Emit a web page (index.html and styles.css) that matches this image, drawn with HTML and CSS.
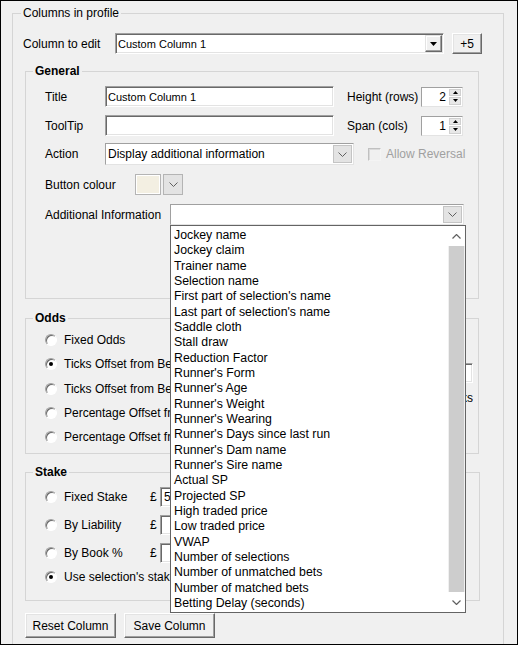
FILE: index.html
```html
<!DOCTYPE html>
<html lang="en">
<head>
    <meta charset="UTF-8">
    <title>Columns in profile</title>
    <link rel="stylesheet" href="styles.css">
</head>
<body>
    <div class="window">
        <fieldset class="group outer">
            <legend>Columns in profile</legend>

            <div class="edit-row">
                <span class="edit-label">Column to edit</span>
                <div class="classic-combo">
                    <span class="value">Custom Column 1</span>
                    <span class="classic-btn">
                        <svg width="7" height="4" viewBox="0 0 7 4"><path d="M0 0h7L3.5 4z" fill="#000"/></svg>
                    </span>
                </div>
                <button class="btn plus">+5</button>
            </div>

            <fieldset class="group general">
                <legend>General</legend>

                <div class="g-row first">
                    <span class="g-label">Title</span>
                    <div class="sunken title-box">Custom Column 1</div>
                    <span class="side-label">Height (rows)</span>
                    <div class="spinner">
                        <span class="num">2</span>
                        <span class="arrows">
                            <span><svg width="5" height="3" viewBox="0 0 5 3"><path d="M0 3h5L2.5 0z" fill="#000"/></svg></span>
                            <span><svg width="5" height="3" viewBox="0 0 5 3"><path d="M0 0h5L2.5 3z" fill="#000"/></svg></span>
                        </span>
                    </div>
                </div>

                <div class="g-row tip">
                    <span class="g-label">ToolTip</span>
                    <div class="sunken title-box"></div>
                    <span class="side-label">Span (cols)</span>
                    <div class="spinner">
                        <span class="num">1</span>
                        <span class="arrows">
                            <span><svg width="5" height="3" viewBox="0 0 5 3"><path d="M0 3h5L2.5 0z" fill="#000"/></svg></span>
                            <span><svg width="5" height="3" viewBox="0 0 5 3"><path d="M0 0h5L2.5 3z" fill="#000"/></svg></span>
                        </span>
                    </div>
                </div>

                <div class="g-row action">
                    <span class="g-label">Action</span>
                    <div class="flat-combo action-combo">
                        <span class="value">Display additional information</span>
                        <span class="chev"><svg width="9" height="5" viewBox="0 0 9 5"><path d="M0.5 0.5L4.5 4.5L8.5 0.5" fill="none" stroke="#606060"/></svg></span>
                    </div>
                    <span class="check"></span>
                    <span class="disabled">Allow Reversal</span>
                </div>

                <div class="g-row colour">
                    <span class="g-label wide">Button colour</span>
                    <span class="swatch"></span>
                    <span class="swatch-btn"><svg width="9" height="5" viewBox="0 0 9 5"><path d="M0.5 0.5L4.5 4.5L8.5 0.5" fill="none" stroke="#606060"/></svg></span>
                </div>

                <div class="g-row info">
                    <span class="g-label wider">Additional Information</span>
                    <div class="flat-combo info-combo">
                        <span class="value"></span>
                        <span class="chev"><svg width="9" height="5" viewBox="0 0 9 5"><path d="M0.5 0.5L4.5 4.5L8.5 0.5" fill="none" stroke="#606060"/></svg></span>
                    </div>
                </div>
            </fieldset>

            <fieldset class="group odds">
                <legend>Odds</legend>
                <div class="odds-body">
                    <!-- the open list covers the rest of these rows -->
                    <div class="options">
                        <label class="opt"><span class="radio"></span>Fixed Odds</label>
                        <label class="opt"><span class="radio on"></span>Ticks Offset from Best Back</label>
                        <label class="opt"><span class="radio"></span>Ticks Offset from Best Lay</label>
                        <label class="opt"><span class="radio"></span>Percentage Offset from Best Back</label>
                        <label class="opt"><span class="radio"></span>Percentage Offset from Best Lay</label>
                    </div>
                    <div class="odds-side">
                        <span class="sunken offset-box"></span>
                        <span class="side-text">ticks</span>
                    </div>
                </div>
            </fieldset>

            <fieldset class="group stake">
                <legend>Stake</legend>
                <div class="stake-body">
                    <div class="s-row">
                        <span class="radio"></span>
                        <span class="s-label">Fixed Stake</span>
                        <span class="pound">£</span>
                        <span class="sunken stake-box">5</span>
                    </div>
                    <div class="s-row">
                        <span class="radio"></span>
                        <span class="s-label">By Liability</span>
                        <span class="pound">£</span>
                        <span class="sunken stake-box"></span>
                    </div>
                    <div class="s-row">
                        <span class="radio"></span>
                        <span class="s-label">By Book %</span>
                        <span class="pound">£</span>
                        <span class="sunken stake-box"></span>
                    </div>
                    <div class="s-row last">
                        <span class="radio on"></span>
                        <span class="s-label">Use selection's stake</span>
                    </div>
                </div>
            </fieldset>

            <div class="buttons">
                <button class="btn wide-btn">Reset Column</button>
                <button class="btn wide-btn">Save Column</button>
            </div>
        </fieldset>

        <!-- open dropdown of Additional Information -->
        <div class="droplist">
            <ul>
                <li>Jockey name</li>
                <li>Jockey claim</li>
                <li>Trainer name</li>
                <li>Selection name</li>
                <li>First part of selection's name</li>
                <li>Last part of selection's name</li>
                <li>Saddle cloth</li>
                <li>Stall draw</li>
                <li>Reduction Factor</li>
                <li>Runner's Form</li>
                <li>Runner's Age</li>
                <li>Runner's Weight</li>
                <li>Runner's Wearing</li>
                <li>Runner's Days since last run</li>
                <li>Runner's Dam name</li>
                <li>Runner's Sire name</li>
                <li>Actual SP</li>
                <li>Projected SP</li>
                <li>High traded price</li>
                <li>Low traded price</li>
                <li>VWAP</li>
                <li>Number of selections</li>
                <li>Number of unmatched bets</li>
                <li>Number of matched bets</li>
                <li>Betting Delay (seconds)</li>
            </ul>
            <div class="scrollbar">
                <span class="sb-arrow"><svg width="9" height="5" viewBox="0 0 9 5"><path d="M0.5 4.5L4.5 0.5L8.5 4.5" fill="none" stroke="#606060" stroke-width="1.2"/></svg></span>
                <span class="sb-thumb"></span>
                <span class="sb-arrow"><svg width="9" height="5" viewBox="0 0 9 5"><path d="M0.5 0.5L4.5 4.5L8.5 0.5" fill="none" stroke="#606060" stroke-width="1.2"/></svg></span>
            </div>
        </div>
    </div>
</body>
</html>
```

FILE: styles.css
```css
* {
    margin: 0;
    padding: 0;
    box-sizing: border-box;
}

body {
    font-family: "Liberation Sans", Arial, sans-serif;
    font-size: 12px;
    color: #000;
    background: #f0f0f0;
}

.window {
    width: 518px;
    height: 645px;
    border: 1px solid #000;
    background: #f0f0f0;
    position: relative;
    overflow: hidden;
}

/* group boxes */
.group {
    border: 1px solid #d5d5d5;
    min-width: 0;
}

.group legend {
    font-size: 12px;
    line-height: 15px;
    padding: 0 2px;
    margin-left: 7px;
}

.outer {
    margin: 5px 0 0 11px;
    width: 492px;
    height: 680px;
    border-bottom: none;
}

.outer > legend {
    margin-left: 8px;
}

.general legend,
.odds legend,
.stake legend {
    font-weight: bold;
}

/* shared controls */
.sunken {
    background: #fff;
    border: 1px solid;
    border-color: #a0a0a0 #fff #fff #a0a0a0;
    box-shadow: inset 1px 1px 0 #696969, inset -1px -1px 0 #e3e3e3;
}

.btn {
    font-family: "Liberation Sans", Arial, sans-serif;
    font-size: 12px;
    color: #000;
    background: #f0f0f0;
    border: 1px solid;
    border-color: #fff #696969 #696969 #fff;
    box-shadow: inset -1px -1px 0 #a0a0a0, inset 1px 1px 0 #e3e3e3;
}

.radio {
    flex: none;
    width: 12px;
    height: 12px;
    border-radius: 50%;
    background: #fff;
    border: 1px solid;
    border-color: #a0a0a0 #fff #fff #a0a0a0;
    box-shadow: inset 1px 1px 0 #696969;
    position: relative;
}

.radio.on::after {
    content: "";
    position: absolute;
    left: 3px;
    top: 3px;
    width: 4px;
    height: 4px;
    border-radius: 50%;
    background: #000;
}

/* column to edit */
.edit-row {
    display: flex;
    align-items: center;
    height: 21px;
    margin: 12px 0 0 10px;
}

.edit-label {
    width: 92px;
}

.classic-combo {
    width: 329px;
    height: 21px;
    display: flex;
    align-items: center;
    justify-content: space-between;
    background: #fff;
    border: 1px solid;
    border-color: #a0a0a0 #fff #fff #a0a0a0;
    box-shadow: inset 1px 1px 0 #696969, inset -1px -1px 0 #e3e3e3;
    padding: 1px 1px 1px 2px;
    font-size: 11px;
}

.classic-btn {
    width: 17px;
    height: 17px;
    display: flex;
    align-items: center;
    justify-content: center;
    background: #f0f0f0;
    border: 1px solid;
    border-color: #e3e3e3 #696969 #696969 #e3e3e3;
    box-shadow: inset -1px -1px 0 #a0a0a0, inset 1px 1px 0 #fff;
}

.plus {
    width: 30px;
    height: 21px;
    margin-left: 8px;
}

/* general */
.general {
    margin: 10px 0 0 12px;
    width: 454px;
    height: 235px;
}

.g-row {
    display: flex;
    align-items: center;
    padding-left: 19px;
}

.g-row.first { margin-top: 7px; }
.g-row.tip { margin-top: 8px; }
.g-row.action { margin-top: 7px; }
.g-row.colour { margin-top: 9px; }
.g-row.info { margin-top: 9px; }

.g-label {
    width: 60px;
}

.g-label.wide {
    width: 90px;
}

.g-label.wider {
    width: 125px;
}

.title-box {
    width: 229px;
    height: 21px;
    padding: 3px 2px;
    font-size: 11px;
    line-height: 14px;
}

.side-label {
    width: 74px;
    margin-left: 13px;
}

.spinner {
    width: 42px;
    height: 20px;
    display: flex;
    background: #fff;
    border: 1px solid #a0a0a0;
    border-right-color: #e3e3e3;
    border-bottom-color: #e3e3e3;
    padding: 1px;
}

.spinner .num {
    flex: 1;
    text-align: right;
    padding-right: 3px;
    line-height: 16px;
}

.spinner .arrows {
    width: 12px;
    display: flex;
    flex-direction: column;
    gap: 1px;
    background: #fff;
}

.spinner .arrows span {
    flex: 1;
    display: flex;
    align-items: center;
    justify-content: center;
    background: #e8e8e8;
    border: 1px solid #d0d0d0;
}

.flat-combo {
    height: 22px;
    display: flex;
    align-items: center;
    justify-content: space-between;
    background: #fff;
    border: 1px solid #a0a0a0;
    border-right-color: #e3e3e3;
    border-bottom-color: #e3e3e3;
    padding: 1px 1px 1px 2px;
}

.action-combo {
    width: 249px;
}

.info-combo {
    width: 294px;
    height: 21px;
}

.chev {
    width: 19px;
    height: 100%;
    display: flex;
    align-items: center;
    justify-content: center;
    background: #e3e3e3;
    border: 1px solid #c4c4c4;
}

.check {
    width: 13px;
    height: 13px;
    margin-left: 14px;
    border: 1px solid;
    border-color: #c0c0c0 #f4f4f4 #f4f4f4 #c0c0c0;
    box-shadow: inset 1px 1px 0 #dadada;
    background: #f0f0f0;
}

.disabled {
    margin-left: 5px;
    color: #a0a0a0;
}

.swatch {
    width: 26px;
    height: 21px;
    background: #f3efe2;
    border: 1px solid #b4b4b4;
    box-shadow: inset 0 0 0 1px #fff;
}

.swatch-btn {
    width: 20px;
    height: 21px;
    margin-left: 2px;
    display: flex;
    align-items: center;
    justify-content: center;
    background: #e3e3e3;
    border: 1px solid #b4b4b4;
}

/* odds */
.odds {
    margin: 12px 0 0 12px;
    width: 454px;
    height: 143px;
}

.odds-body {
    display: flex;
}

.options {
    width: 144px;
    overflow: hidden;
    white-space: nowrap;
    padding: 2px 0 0 19px;
}

.opt {
    height: 24.25px;
    display: flex;
    align-items: center;
    gap: 7px;
}

.odds-side {
    width: 7px;
    overflow: hidden;
    margin-left: auto;
    margin-right: 5px;
    display: flex;
    flex-direction: column;
    align-items: flex-end;
    white-space: nowrap;
}

.offset-box {
    flex: none;
    width: 44px;
    height: 20px;
    margin-top: 37px;
}

.side-text {
    margin-top: 8px;
    line-height: 15px;
}

/* stake */
.stake {
    margin: 11px 0 0 12px;
    width: 455px;
    height: 136px;
}

.stake-body {
    width: 144px;
    overflow: hidden;
    white-space: nowrap;
    padding-top: 3px;
}

.s-row {
    height: 28px;
    display: flex;
    align-items: center;
    padding-left: 19px;
}

.s-row > * {
    flex: none;
}

.s-row.last {
    height: 20px;
}

.s-label {
    width: 86px;
    margin-left: 7px;
}

.s-row.last .s-label {
    width: auto;
}

.pound {
    width: 10px;
}

.stake-box {
    width: 80px;
    height: 20px;
    padding: 2px 3px;
    line-height: 14px;
}

/* bottom buttons */
.buttons {
    display: flex;
    gap: 8px;
    margin: 12px 0 0 12px;
}

.wide-btn {
    width: 91px;
    height: 25px;
}

/* dropdown list */
.droplist {
    position: absolute;
    left: 169px;
    top: 224px;
    width: 296px;
    background: #fff;
    border: 1px solid #646464;
    padding: 2px 0 1px;
}

.droplist ul {
    list-style: none;
    font-size: 12.3px;
    line-height: 15.33px;
    padding-left: 3px;
    padding-right: 17px;
}

.scrollbar {
    position: absolute;
    right: 0;
    top: 0;
    bottom: 0;
    width: 17px;
    display: flex;
    flex-direction: column;
    background: #f0f0f0;
}

.sb-arrow {
    height: 20px;
    display: flex;
    align-items: center;
    justify-content: center;
    background: #fff;
}

.sb-thumb {
    flex: 1;
    margin: 0 1px;
    background: #cdcdcd;
}
```
